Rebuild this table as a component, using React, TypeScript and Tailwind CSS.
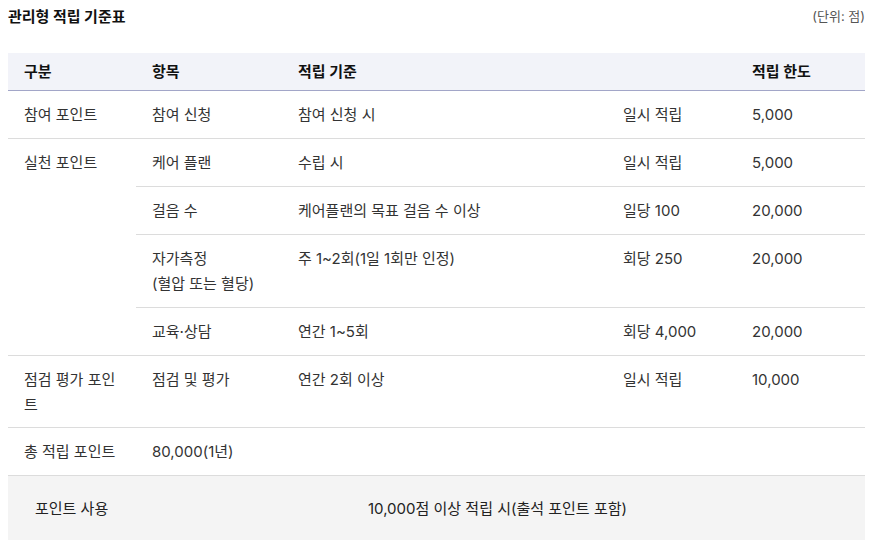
import React from "react";

const font = { fontFamily: 'Inter, "Noto Sans CJK KR", sans-serif' };

const td = "align-top px-4 py-[11px] leading-[25px]";
const row = "border-b border-[#dcdcdc]";

export default function App() {
  return (
    <div className="w-[873px] h-[540px] overflow-hidden bg-white px-2 pt-[5px] text-[15px] text-[#333]" style={font}>
      <div className="flex items-center justify-between h-6">
        <h2 className="font-bold text-[15px] text-[#111]">관리형 적립 기준표</h2>
        <span className="text-[13px] text-[#555]">(단위: 점)</span>
      </div>
      <table className="mt-6 w-full border-collapse table-fixed">
        <colgroup>
          <col className="w-[128px]" />
          <col className="w-[146px]" />
          <col className="w-[325px]" />
          <col className="w-[129px]" />
          <col />
        </colgroup>
        <thead>
          <tr className="bg-[#f2f3f9] border-b border-[#a2a6c8] text-left text-[#111]">
            <th className="px-4 py-[6px] leading-[25px] font-bold">구분</th>
            <th className="px-4 py-[6px] leading-[25px] font-bold">항목</th>
            <th className="px-4 py-[6px] leading-[25px] font-bold" colSpan={2}>적립 기준</th>
            <th className="px-4 py-[6px] leading-[25px] font-bold">적립 한도</th>
          </tr>
        </thead>
        <tbody>
          <tr className={row}>
            <td className={td}>참여 포인트</td>
            <td className={td}>참여 신청</td>
            <td className={td}>참여 신청 시</td>
            <td className={td}>일시 적립</td>
            <td className={td}>5,000</td>
          </tr>
          <tr className={row}>
            <td className={td + " " + row} rowSpan={4}>실천 포인트</td>
            <td className={td}>케어 플랜</td>
            <td className={td}>수립 시</td>
            <td className={td}>일시 적립</td>
            <td className={td}>5,000</td>
          </tr>
          <tr className={row}>
            <td className={td}>걸음 수</td>
            <td className={td}>케어플랜의 목표 걸음 수 이상</td>
            <td className={td}>일당 100</td>
            <td className={td}>20,000</td>
          </tr>
          <tr className={row}>
            <td className={td}>
              자가측정
              <br />
              (혈압 또는 혈당)
            </td>
            <td className={td}>주 1~2회(1일 1회만 인정)</td>
            <td className={td}>회당 250</td>
            <td className={td}>20,000</td>
          </tr>
          <tr className={row}>
            <td className={td}>교육·상담</td>
            <td className={td}>연간 1~5회</td>
            <td className={td}>회당 4,000</td>
            <td className={td}>20,000</td>
          </tr>
          <tr className={row}>
            <td className="align-top px-4 pt-[11px] pb-[10px] leading-[25px]">점검 평가 포인트</td>
            <td className={td}>점검 및 평가</td>
            <td className={td}>연간 2회 이상</td>
            <td className={td}>일시 적립</td>
            <td className={td}>10,000</td>
          </tr>
          <tr className={row}>
            <td className={td}>총 적립 포인트</td>
            <td className={td}>80,000(1년)</td>
            <td className={td}></td>
            <td className={td}></td>
            <td className={td}></td>
          </tr>
        </tbody>
      </table>
      <div className="flex items-center bg-[#f4f4f4] h-[66px] text-[#222]">
        <span className="pl-[27px] w-[360px]">포인트 사용</span>
        <span>10,000점 이상 적립 시(출석 포인트 포함)</span>
      </div>
    </div>
  );
}
